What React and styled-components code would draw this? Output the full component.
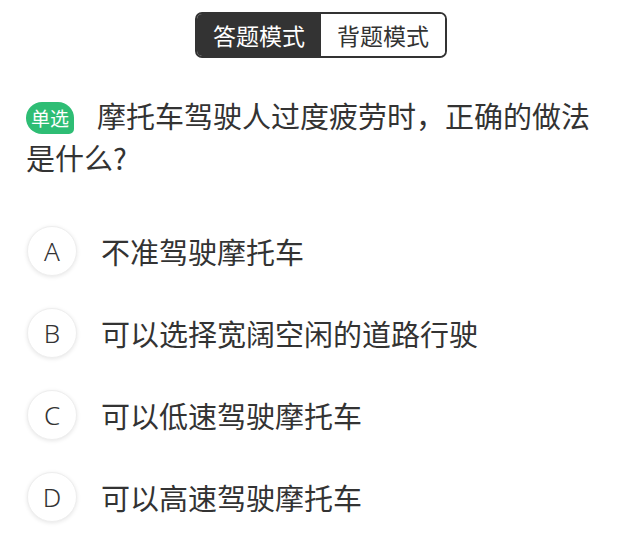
import React, { useState } from "react";
import styled, { createGlobalStyle } from "styled-components";

const GlobalStyle = createGlobalStyle`
  body {
    margin: 0;
    background: #ffffff;
    font-family: "Noto Sans CJK SC", "Noto Sans", sans-serif;
    color: #333333;
  }
`;

const options = [
  { key: "A", text: "不准驾驶摩托车" },
  { key: "B", text: "可以选择宽阔空闲的道路行驶" },
  { key: "C", text: "可以低速驾驶摩托车" },
  { key: "D", text: "可以高速驾驶摩托车" },
];

function App() {
  const [mode, setMode] = useState("answer");

  return (
    <Page>
      <GlobalStyle />
      <Header>
        <Segment>
          <SegBtn active={mode === "answer"} onClick={() => setMode("answer")}>
            答题模式
          </SegBtn>
          <SegBtn active={mode === "recite"} onClick={() => setMode("recite")}>
            背题模式
          </SegBtn>
        </Segment>
      </Header>

      <Question>
        <Tag>单选</Tag>
        摩托车驾驶人过度疲劳时，正确的做法是什么?
      </Question>

      <OptionList>
        {options.map((o) => (
          <Option key={o.key}>
            <Circle>{o.key}</Circle>
            <OptionText>{o.text}</OptionText>
          </Option>
        ))}
      </OptionList>
    </Page>
  );
}

const Page = styled.div`
  width: 640px;
  height: 560px;
  overflow: hidden;
  box-sizing: border-box;
  padding: 12px 26px 0 26px;
`;

const Header = styled.div`
  display: flex;
  justify-content: center;
  padding-left: 2px;
`;

const Segment = styled.div`
  display: flex;
  border: 2px solid #333333;
  border-radius: 7px;
  overflow: hidden;
`;

const SegBtn = styled.div`
  width: 124px;
  height: 42px;
  display: flex;
  align-items: center;
  justify-content: center;
  font-size: 23px;
  color: ${(props) => (props.active ? "#ffffff" : "#333333")};
  background: ${(props) => (props.active ? "#333333" : "#ffffff")};
  cursor: pointer;
`;

const Question = styled.div`
  margin-top: 36px;
  font-size: 29px;
  line-height: 42px;
  color: #333333;
`;

const Tag = styled.span`
  display: inline-block;
  width: 48px;
  height: 32px;
  line-height: 31px;
  text-align: center;
  margin-right: 23px;
  vertical-align: 2px;
  background: #2ebd74;
  color: #ffffff;
  font-size: 19px;
  border-radius: 16px 16px 5px 16px;
`;

const OptionList = styled.div`
  margin-top: 48px;
  display: flex;
  flex-direction: column;
  gap: 33px;
`;

const Option = styled.div`
  display: flex;
  align-items: center;
  height: 49px;
`;

const Circle = styled.div`
  width: 48px;
  height: 48px;
  margin-left: 1px;
  flex: none;
  border-radius: 50%;
  background: #ffffff;
  border: 1px solid #eeeeee;
  box-shadow: 0 1px 4px rgba(0, 0, 0, 0.1);
  display: flex;
  align-items: center;
  justify-content: center;
  font-family: "Noto Sans", sans-serif;
  font-size: 26px;
  font-weight: 300;
  color: #333333;
`;

const OptionText = styled.div`
  margin-left: 24px;
  font-size: 29px;
  color: #333333;
`;

export default App;
